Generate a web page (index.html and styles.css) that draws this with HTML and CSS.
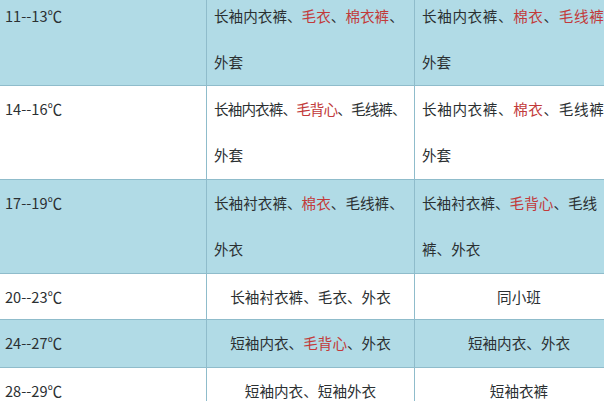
FILE: index.html
```html
<!DOCTYPE html>
<html lang="zh">
<head>
<meta charset="utf-8">
<link rel="stylesheet" href="styles.css">
</head>
<body>
<div class="table">
  <div class="cell temp blue">11--13℃</div>
  <div class="cell blue"><span class="ln">长袖内衣裤、<em>毛衣</em>、<em>棉衣裤</em>、</span><span class="ln">外套</span></div>
  <div class="cell blue"><span class="ln wide">长袖内衣裤、<em>棉衣</em>、<em>毛线裤</em>、</span><span class="ln">外套</span></div>

  <div class="cell temp">14--16℃</div>
  <div class="cell"><span class="ln tight">长袖内衣裤、<em>毛背心</em>、毛线裤、</span><span class="ln">外套</span></div>
  <div class="cell"><span class="ln wide">长袖内衣裤、<em>棉衣</em>、毛线裤、</span><span class="ln">外套</span></div>

  <div class="cell temp blue">17--19℃</div>
  <div class="cell blue"><span class="ln">长袖衬衣裤、<em>棉衣</em>、毛线裤、</span><span class="ln">外衣</span></div>
  <div class="cell blue"><span class="ln">长袖衬衣裤、<em>毛背心</em>、毛线</span><span class="ln">裤、外衣</span></div>

  <div class="cell temp">20--23℃</div>
  <div class="cell center">长袖衬衣裤、毛衣、外衣</div>
  <div class="cell center">同小班</div>

  <div class="cell temp blue">24--27℃</div>
  <div class="cell center blue">短袖内衣、<em>毛背心</em>、外衣</div>
  <div class="cell center blue">短袖内衣、外衣</div>

  <div class="cell temp">28--29℃</div>
  <div class="cell center">短袖内衣、短袖外衣</div>
  <div class="cell center">短袖衣裤</div>
</div>
</body>
</html>
```

FILE: styles.css
```css
html, body {
  margin: 0;
  padding: 0;
  background: #ffffff;
  overflow: hidden;
  width: 604px;
  height: 401px;
}

.table {
  display: grid;
  grid-template-columns: 206px 207px 208px;
  grid-template-rows: 92px 93px 93px 45px 47px 46px;
  gap: 1px;
  background: #8fbccb;
  width: 623px;
  margin-top: -7px;
  font-family: "Noto Sans CJK SC", "Noto Sans", sans-serif;
  font-size: 14.6px;
  color: #2b3032;
}

.cell {
  background: #ffffff;
  line-height: 46px;
  padding: 0 7px;
  white-space: nowrap;
  overflow: hidden;
}

.cell.blue {
  background: #b1dbe6;
}

.cell.temp {
  padding-left: 5px;
}

.cell.center {
  text-align: center;
  padding: 0;
}

.ln {
  display: block;
}

.tight {
  letter-spacing: -0.9px;
}

.wide {
  letter-spacing: 0.6px;
}

em {
  font-style: normal;
  color: #c23a3a;
}
```
